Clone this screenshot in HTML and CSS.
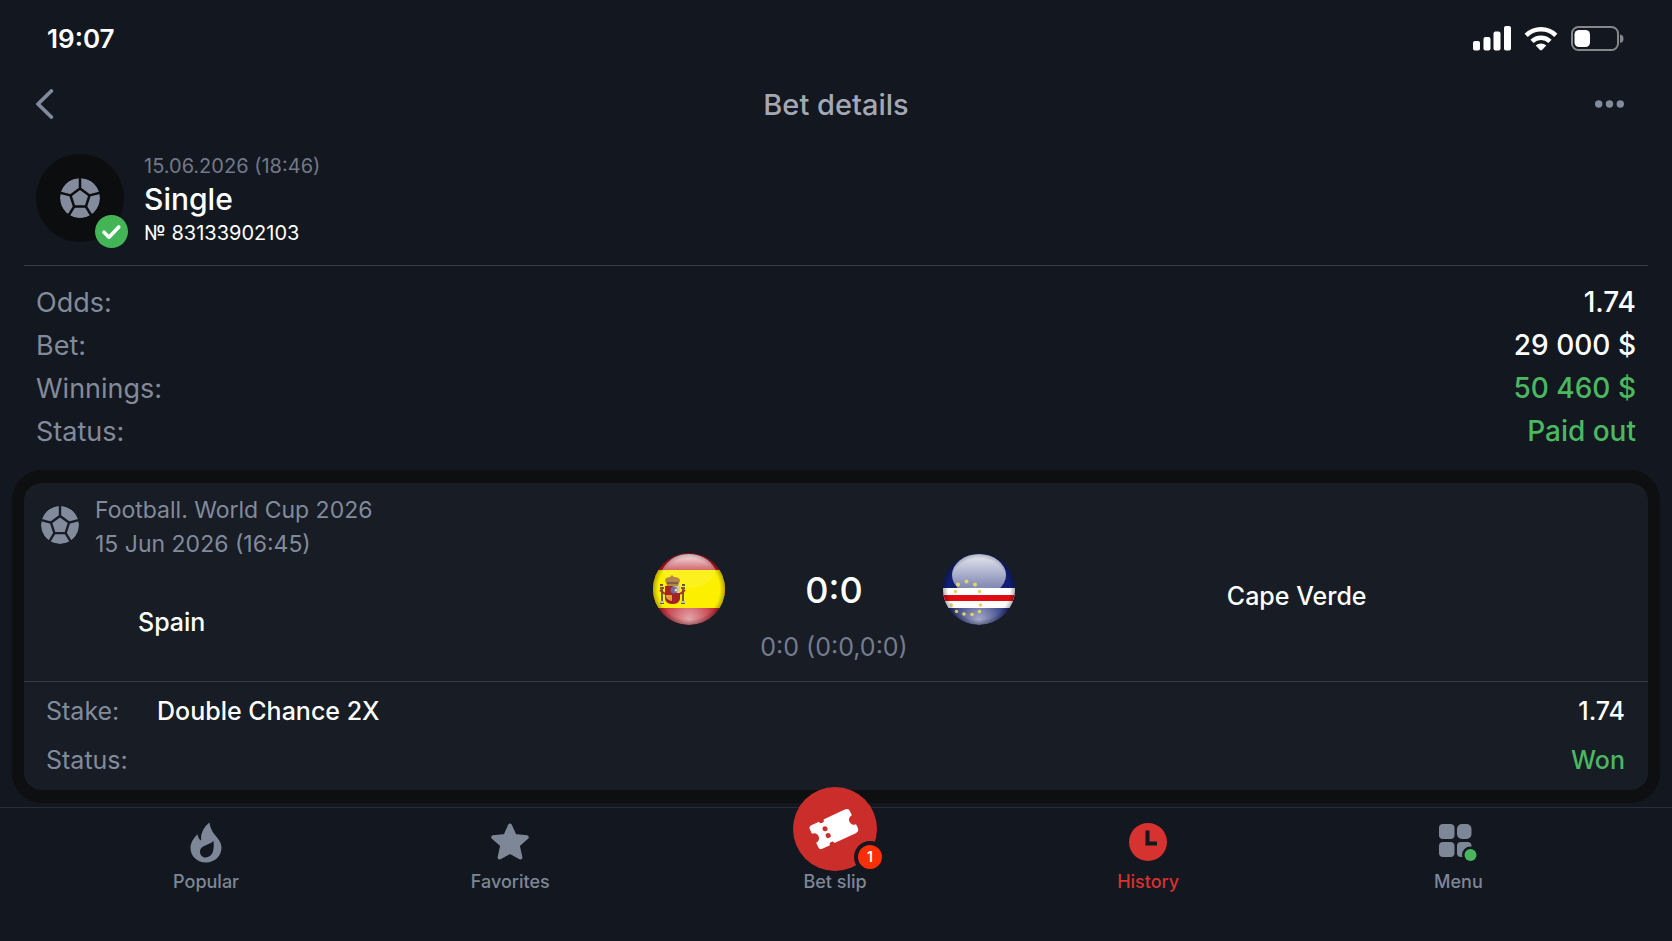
FILE: index.html
```html
<!DOCTYPE html>
<html lang="en">
<head>
<meta charset="utf-8">
<meta name="viewport" content="width=device-width, initial-scale=1">
<title>Bet details</title>
<link rel="stylesheet" href="styles.css">
</head>
<body>
<svg class="defs" aria-hidden="true">
  <defs>
    <symbol id="ball" viewBox="0 0 40 40">
      <mask id="seams">
        <circle cx="20" cy="20" r="20" fill="#fff"/>
        <g fill="none" stroke="#000" stroke-width="2.5">
          <path d="M20 10.500 29.500 17.400 25.900 28.600H14.100L10.500 17.400Z"/>
          <path d="M20 10.500V-1M29.500 17.400 41 14.500M25.900 28.600 32 38.500M14.100 28.600 8 38.500M10.500 17.400-1 14.500"/>
        </g>
      </mask>
      <circle cx="20" cy="20" r="20" fill="currentColor" mask="url(#seams)"/>
    </symbol>
  </defs>
</svg>
<div class="app">
  <div class="statusbar">
    <time class="clock">19:07</time>
    <div class="indicators">
      <svg width="38" height="25" viewBox="0 0 38 25" fill="#fff" aria-label="Signal"><rect x="0" y="15" width="7" height="9.500" rx="2"/><rect x="10.500" y="11" width="7" height="13.500" rx="2"/><rect x="20.500" y="5.500" width="7" height="19" rx="2"/><rect x="31" y="0" width="7" height="24.500" rx="2"/></svg>
      <svg width="34" height="25" viewBox="0 0 34 25" aria-label="Wi-Fi"><g fill="none" stroke="#fff" stroke-width="4.600"><path d="M2.200 9.300a21 21 0 0 1 29.600 0"/><path d="M8 15.400a12.800 12.800 0 0 1 18 0"/></g><path d="M11.700 19.600a7.700 7.700 0 0 1 10.600 0L18 23.900q-1 .9-2 0Z" fill="#fff"/></svg>
      <svg width="53" height="25" viewBox="0 0 53 25" aria-label="Battery"><rect x="1" y="1" width="46" height="23" rx="6.500" fill="none" stroke="#85878b" stroke-width="2"/><rect x="3.500" y="4" width="15.500" height="17" rx="4.500" fill="#fff"/><path d="M49 8.500q3.500.5 3.500 4.300t-3.500 4.200Z" fill="#85878b"/></svg>
    </div>
  </div>
  <header class="topbar">
    <button class="icon-button" type="button" aria-label="Back"><svg width="18" height="30" viewBox="0 0 18 30" fill="none" stroke="currentColor" stroke-width="3.800" stroke-linecap="round" stroke-linejoin="round"><path d="M15.300 2 2 15l13.300 13"/></svg></button>
    <h1>Bet details</h1>
    <button class="icon-button" type="button" aria-label="More"><svg width="29" height="8" viewBox="0 0 29 8" fill="currentColor"><circle cx="3.700" cy="4" r="3.700"/><circle cx="14.500" cy="4" r="3.700"/><circle cx="25.300" cy="4" r="3.700"/></svg></button>
  </header>
  <main>
    <section class="summary">
      <div class="avatar">
        <svg class="ball-large"><use href="#ball"/></svg>
        <svg class="check" viewBox="0 0 33 33"><circle cx="16.500" cy="16.500" r="16.500" fill="#43b557"/><path d="m9 17.200 5 5L23.800 12" fill="none" stroke="#fff" stroke-width="3.600" stroke-linecap="round" stroke-linejoin="round"/></svg>
      </div>
      <div class="ticket">
        <time class="placed">15.06.2026 (18:46)</time>
        <h2>Single</h2>
        <p class="number">№ 83133902103</p>
      </div>
    </section>
    <dl class="totals">
      <div><dt>Odds:</dt><dd>1.74</dd></div>
      <div><dt>Bet:</dt><dd>29 000 $</dd></div>
      <div><dt>Winnings:</dt><dd class="good">50 460 $</dd></div>
      <div><dt>Status:</dt><dd class="good">Paid out</dd></div>
    </dl>
    <article class="event">
      <div class="match">
        <div class="home">
          <div class="league">
            <svg class="ball-small"><use href="#ball"/></svg>
            <p>Football. World Cup 2026<br><time>15 Jun 2026 (16:45)</time></p>
          </div>
          <p class="team">Spain</p>
        </div>
        <div class="result">
          <svg class="flag" viewBox="0 0 72 72" role="img" aria-label="Spain flag">
            <defs>
              <clipPath id="disc"><circle cx="36" cy="36" r="36"/></clipPath>
              <linearGradient id="gloss" x2="0" y2="1"><stop stop-color="#fff" stop-opacity=".9"/><stop offset="1" stop-color="#fff" stop-opacity=".36"/></linearGradient>
              <radialGradient id="glow" cx=".5" cy=".92" r=".48"><stop stop-color="#fff" stop-opacity=".62"/><stop offset="1" stop-color="#fff" stop-opacity="0"/></radialGradient>
              <radialGradient id="rim"><stop offset=".85" stop-opacity="0"/><stop offset="1" stop-opacity=".3"/></radialGradient>
            </defs>
            <g clip-path="url(#disc)">
              <path fill="#b9131f" d="M0 0h72v72H0z"/>
              <circle cx="36" cy="36" r="36" fill="url(#glow)"/>
              <path fill="url(#gloss)" d="M9 17C16 5 25 1 36 1s21 5 27 16Z"/>
              <path fill="#fcf000" d="M0 17h72v38H0z"/>
              <path fill="#fff" opacity=".12" d="M9 17h54q-5 17-27 18Q14 34 9 17Z"/>
              <g>
                <path fill="#b5864c" d="M12 27q1-3 5-3l2-2 2 2q6 0 6 4l-2 5H14Z"/>
                <path fill="#80613f" d="M14 29h11v2H14Z"/>
                <path fill="#a42127" d="M12 33h15v13q-1 5-7.500 5T12 46Z"/>
                <path fill="#d7c9a5" d="M20 33h7v7h-7Z"/><path fill="#dba13a" d="M13 42h6v6q-5-1-6-4Z"/>
                <circle cx="21" cy="37" r="3.500" fill="#73688f"/><circle cx="23" cy="37" r="1.500" fill="#e7d6bd"/>
                <path fill="#745b48" d="M7 34h4v2h-1v12h1v3H7v-3h1V36H7ZM28 34h4v2h-1v12h1v3h-4v-3h1V36h-1Z"/>
                <path stroke="#b22c23" stroke-width="2" d="m7 37 5 4M32 37l-5 4"/>
                <path fill="#665340" d="M7 31h3v2H7ZM29 31h3v2h-3Z"/>
                <path stroke="#dde0e2" stroke-width="1.500" d="M7 49h4m17 0h4"/>
              </g>
              <circle cx="36" cy="36" r="36" fill="url(#rim)"/>
            </g>
          </svg>
          <div class="score">
            <strong>0:0</strong>
            <span>0:0 (0:0,0:0)</span>
          </div>
          <svg class="flag" viewBox="0 0 72 72" role="img" aria-label="Cape Verde flag">
            <g clip-path="url(#disc)">
              <path fill="#111f70" d="M0 0h72v72H0z"/>
              <circle cx="36" cy="36" r="36" fill="url(#glow)"/>
              <ellipse cx="36" cy="22" rx="27" ry="21" fill="url(#gloss)"/>
              <path fill="#fff" d="M0 35h72v20H0z"/>
              <path fill="#e30b13" d="M0 42h72v6H0z"/>
              <g fill="#e5d35a"><circle cx="23.500" cy="28.500" r="2"/><circle cx="15" cy="31.500" r="2"/><circle cx="32" cy="31.500" r="2"/><circle cx="12.500" cy="38.500" r="1.800"/><circle cx="36.500" cy="38.500" r="1.800"/><circle cx="8.500" cy="52" r="1.800"/><circle cx="37.500" cy="52" r="1.800"/><circle cx="13.500" cy="58.500" r="1.800"/><circle cx="36.500" cy="58.500" r="1.800"/><circle cx="21" cy="61" r="1.800"/><circle cx="29" cy="61.500" r="1.800"/></g>
              <circle cx="36" cy="36" r="36" fill="url(#rim)"/>
            </g>
          </svg>
        </div>
        <p class="team away">Cape Verde</p>
      </div>
      <dl class="pick">
        <div><dt>Stake:</dt><dd class="market">Double Chance 2X</dd><dd class="end">1.74</dd></div>
        <div><dt>Status:</dt><dd class="end good">Won</dd></div>
      </dl>
    </article>
  </main>
  <nav class="tabs">
    <a href="#popular"><span class="icon"><svg width="32" height="41" viewBox="0 0 32 41" fill="currentColor" fill-rule="evenodd"><path d="M19.500.5C13 5.500 10.500 12 11.200 18.500c-2-.7-3.200-3-3.600-6.200C3.500 16 .5 21 .5 26c0 8.300 6.700 14.500 15.500 14.500S31.500 34 31.500 25.500c0-9.500-10.500-12-12-25ZM23.500 19c.8 8-.2 15.500-7.500 16.500-3.500.3-6-2.400-6-5.800 0-6.500 8-5.700 13.500-10.700Z"/></svg></span>Popular</a>
    <a href="#favorites"><span class="icon"><svg width="40" height="40" viewBox="0 0 40 40" fill="currentColor" stroke="currentColor" stroke-width="4" stroke-linejoin="round"><path d="m20 3.500 4.700 10.500 12 1.200-9 8 2.700 12.300L20 29.800 9.600 35.500l2.700-12.300-9-8 12-1.200Z"/></svg></span>Favorites</a>
    <a href="#slip"><span class="icon"><span class="slip"><svg width="84" height="84" viewBox="0 0 84 84"><g transform="rotate(-25 41 42)"><path fill="#fff" fill-rule="evenodd" d="M22 29h8.500a2.500 2.500 0 0 0 5 0H59q4 0 4 4v4a5 5 0 0 0 0 10v4q0 4-4 4H35.500a2.500 2.500 0 0 0-5 0H22q-3 0-3-3v-5a5 5 0 0 0 0-10v-5q0-3 3-3Z"/><g fill="#cb2d2b"><circle cx="33" cy="38" r="2.500"/><circle cx="33" cy="45.500" r="2.500"/></g></g></svg><span class="count">1</span></span></span>Bet slip</a>
    <a href="#history" class="current" aria-current="page"><span class="icon"><svg width="38" height="38" viewBox="0 0 38 38"><circle cx="19" cy="19" r="19" fill="currentColor"/><path d="M18.500 7.500v13H28" fill="none" stroke="#13171f" stroke-width="4"/></svg></span>History</a>
    <a href="#menu"><span class="icon"><svg width="38" height="38" viewBox="0 0 38 38" fill="currentColor"><rect x="0" y="1" width="15.500" height="15" rx="4"/><rect x="18" y="1" width="14.500" height="15" rx="5"/><rect x="0" y="19" width="15.500" height="15" rx="4"/><rect x="18" y="19" width="14.500" height="15" rx="4"/><circle cx="31.500" cy="32" r="8.500" fill="#13171f"/><circle cx="31.500" cy="32" r="6" fill="#49b55d"/></svg></span>Menu</a>
  </nav>
</div>
</body>
</html>
```
FILE: styles.css
```css
:root {
  --bg: #13171f;
  --panel: #171c25;
  --frame: #0e0f11;
  --line: #383d47;
  --muted: #828b9b;
  --green: #4cb761;
  --red: #d6322f;
}
* { box-sizing: border-box; }
body {
  margin: 0;
  background: var(--bg);
  color: #fff;
  font-family: Inter, "Liberation Sans", sans-serif;
}
h1, h2, p, dl, dd { margin: 0; }
.defs { position: absolute; width: 0; height: 0; }
.app { display: flex; flex-direction: column; min-height: 100vh; }
main { flex: 1; }

.statusbar {
  display: flex;
  align-items: center;
  justify-content: space-between;
  height: 76px;
  padding: 0 48px 0 47px;
}
.clock { font-size: 26px; font-weight: 600; }
.indicators { display: flex; gap: 13px; }

.topbar {
  display: grid;
  grid-template-columns: 64px 1fr 64px;
  align-items: center;
  height: 56px;
  padding: 0 48px 0 36px;
  color: var(--muted);
}
.topbar h1 { text-align: center; font-size: 29px; font-weight: 500; color: #a3a8b2; padding-left: 12px; }
.icon-button {
  display: flex;
  align-items: center;
  height: 44px;
  padding: 0;
  border: 0;
  background: none;
  color: inherit;
  cursor: pointer;
}
.icon-button:last-child { justify-content: flex-end; }

.summary {
  display: flex;
  gap: 20px;
  margin: 0 24px;
  padding: 22px 12px 17px;
  border-bottom: 1px solid var(--line);
}
.avatar {
  position: relative;
  display: grid;
  place-items: center;
  width: 88px;
  height: 88px;
  border-radius: 50%;
  background: #0c0d0f;
  color: #838b9c;
}
.ball-large { width: 40px; height: 40px; }
.ball-small { flex: none; width: 38px; height: 38px; margin-top: 13px; }
.check { position: absolute; right: -4px; bottom: -6px; width: 33px; height: 33px; }
.placed { display: block; font-size: 20px; line-height: 25px; color: #717989; }
.summary h2 { font-size: 30px; line-height: 40px; font-weight: 500; }
.number { font-size: 20px; line-height: 29px; }

.totals { padding: 15px 36px 17px; font-size: 28px; line-height: 43px; }
.totals div { display: flex; justify-content: space-between; }
.totals dt { font-size: 27px; color: var(--muted); }
.totals dd { font-weight: 500; }
.good { color: var(--green); }

.event {
  margin: 0 12px 2px;
  border: solid var(--frame);
  border-width: 13px 12px;
  border-radius: 30px;
  background: var(--panel);
}
.match {
  display: grid;
  grid-template-columns: 629fr auto 633fr;
  border-bottom: 1px solid var(--line);
}
.league { display: flex; gap: 16px; padding: 10px 0 0 17px; font-size: 23px; line-height: 34px; color: var(--muted); }
.team { font-size: 25px; line-height: 32px; font-weight: 500; }
.home .team { margin: 45px 0 43px 114px; }
.team.away { margin: 97px 11% 0 0; text-align: center; }
.result { display: flex; justify-content: space-between; width: 362px; padding-top: 70px; }
.flag { width: 72px; height: 72px; }
.score { display: flex; flex-direction: column; align-items: center; font-size: 25px; line-height: 38px; color: #747c8d; }
.score strong { font-size: 36px; line-height: 75px; font-weight: 500; color: #fff; }
.pick { padding: 5px 23px 5px 22px; font-size: 25px; line-height: 49px; }
.pick div { display: flex; }
.pick dt { width: 111px; color: var(--muted); }
.pick dd { font-weight: 500; }
.pick .end { margin-left: auto; }

.tabs {
  display: grid;
  grid-template-columns: 304fr 304fr 345fr 281fr 339fr;
  padding: 0 44px 42px 54px;
  border-top: 1px solid #272d36;
}
.tabs a {
  display: flex;
  flex-direction: column;
  align-items: center;
  padding-top: 11px;
  font-size: 18px;
  line-height: 34px;
  font-weight: 500;
  color: #7e8797;
  text-decoration: none;
}
.tabs .current { color: var(--red); }
.icon { display: grid; place-items: center; height: 46px; }
.slip {
  position: relative;
  width: 84px;
  height: 84px;
  margin: -46px 0 -20px;
  border-radius: 50%;
  background: #cb2d2b;
}
.count {
  position: absolute;
  right: -9px;
  bottom: -2px;
  width: 32px;
  height: 32px;
  border: 4px solid var(--bg);
  border-radius: 50%;
  background: #fa2f08;
  color: #fff;
  font-size: 14px;
  line-height: 24px;
  font-weight: 600;
  text-align: center;
}
```
